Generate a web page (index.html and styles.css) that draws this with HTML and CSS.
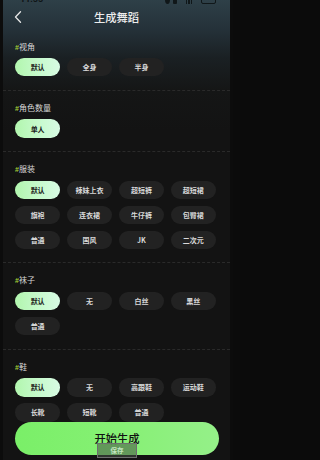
FILE: index.html
```html
<!DOCTYPE html>
<html lang="zh-CN">
<head>
<meta charset="utf-8">
<title>生成舞蹈</title>
<link rel="stylesheet" href="styles.css">
</head>
<body>
<div class="app">
  <div class="statusbar">
    <span class="time">11:55</span>
    <span class="sicons">
      <span class="dot"></span><span class="sq"></span>
      <span class="bars"><i></i><i></i><i></i></span>
      <span class="batt"></span>
    </span>
  </div>
  <header class="header">
    <svg class="back" viewBox="0 0 8 12" width="8" height="12"><path d="M6.5 0.8 L1.5 6 L6.5 11.2" fill="none" stroke="#e6e6e6" stroke-width="1.3" stroke-linecap="round" stroke-linejoin="round"/></svg>
    <h1 class="title">生成舞蹈</h1>
  </header>

  <section class="section first">
    <div class="label"><span class="hash">#</span>视角</div>
    <div class="chips">
      <div class="chip on">默认</div><div class="chip">全身</div><div class="chip">半身</div>
    </div>
  </section>

  <section class="section">
    <div class="label"><span class="hash">#</span>角色数量</div>
    <div class="chips">
      <div class="chip on">单人</div>
    </div>
  </section>

  <section class="section">
    <div class="label"><span class="hash">#</span>服装</div>
    <div class="chips">
      <div class="chip on">默认</div><div class="chip">辣妹上衣</div><div class="chip">超短裤</div><div class="chip">超短裙</div>
      <div class="chip">旗袍</div><div class="chip">连衣裙</div><div class="chip">牛仔裤</div><div class="chip">包臀裙</div>
      <div class="chip">普通</div><div class="chip">国风</div><div class="chip">JK</div><div class="chip">二次元</div>
    </div>
  </section>

  <section class="section">
    <div class="label"><span class="hash">#</span>袜子</div>
    <div class="chips">
      <div class="chip on">默认</div><div class="chip">无</div><div class="chip">白丝</div><div class="chip">黑丝</div>
      <div class="chip">普通</div>
    </div>
  </section>

  <section class="section">
    <div class="label"><span class="hash">#</span>鞋</div>
    <div class="chips">
      <div class="chip on">默认</div><div class="chip">无</div><div class="chip">高跟鞋</div><div class="chip">运动鞋</div>
      <div class="chip">长靴</div><div class="chip">短靴</div><div class="chip">普通</div>
    </div>
  </section>

  <button class="start">开始生成</button>
  <div class="toast">保存</div>
</div>
</body>
</html>
```
FILE: styles.css
```css
* { box-sizing: border-box; }
html, body { margin: 0; padding: 0; background: #0b0b0b; }
body {
  font-family: "Noto Sans CJK SC", "Noto Sans", sans-serif;
  color: #dedede;
}
.app {
  position: relative;
  width: 233px;
  height: 460px;
  overflow: hidden;
  border-left: 3px solid #0c0c0c;
  border-right: 3px solid #0c0c0c;
  background: linear-gradient(180deg, #2e4048 0px, #25323a 28px, #1a2023 58px, #151616 90px, #131313 130px, #131313 100%);
}
.statusbar {
  height: 4px;
  overflow: hidden;
  display: flex;
  align-items: flex-end;
  justify-content: space-between;
  padding: 0 14px 0 17px;
}
.time {
  font-family: "Roboto", sans-serif;
  font-size: 9px;
  line-height: 9px;
  font-weight: 700;
  color: #0e1416;
  flex: none;
}
.sicons { display: flex; align-items: flex-end; gap: 3px; flex: none; height: 10px; }
.dot { width: 5px; height: 9px; border-radius: 50%; background: #101719; }
.sq { width: 4px; height: 8px; background: #101719; border-radius: 1px; margin-right: 6px; }
.bars { display: flex; gap: 1px; align-items: flex-end; margin-right: 6px; }
.bars i { display: block; width: 1.5px; height: 9px; background: #101719; }
.batt { width: 15px; height: 8px; border: 1px solid #101719; border-radius: 2px; }

.header {
  position: relative;
  height: 25.5px;
  display: flex;
  align-items: center;
  justify-content: center;
}
.back { position: absolute; left: 10.5px; top: 6.5px; }
.title {
  margin: 0;
  font-size: 11.3px;
  line-height: 14px;
  font-weight: 500;
  color: #ececec;
  letter-spacing: 0;
}

.section {
  padding: 12px 14px 13.3px 12px;
  border-top: 1px dashed #2a2a2a;
}
.section.first { border-top: none; }
.label {
  font-size: 8px;
  line-height: 10px;
  height: 10px;
  color: #d8d8d8;
  margin-bottom: 6.7px;
}
.hash { color: #a4cf3a; font-weight: 700; font-family: "Liberation Sans", sans-serif; font-size: 7px; }
.chips {
  display: grid;
  grid-template-columns: repeat(4, 1fr);
  column-gap: 6.67px;
  row-gap: 6.7px;
}
.chip {
  height: 18.3px;
  border-radius: 9.2px;
  background: #222222;
  display: flex;
  align-items: center;
  justify-content: center;
  font-size: 7px;
  font-weight: 700;
  color: #d9d9d9;
  white-space: nowrap;
}
.chip.on {
  background: linear-gradient(90deg, #b2f6ae 0%, #c9fad0 60%, #d8fbe4 100%);
  color: #1a1a1a;
}

.start {
  position: absolute;
  left: 12px;
  top: 421.7px;
  width: 204px;
  height: 33.3px;
  border: none;
  border-radius: 17px;
  background: linear-gradient(90deg, #7aef68 0%, #86f074 50%, #95f089 100%);
  font-family: "Noto Sans CJK SC", sans-serif;
  font-size: 11.3px;
  font-weight: 500;
  color: #111;
  padding: 0;
  line-height: 14px;
}
.toast {
  position: absolute;
  left: 94.3px;
  top: 443.3px;
  width: 39.5px;
  height: 15px;
  border: 1px solid #6e6e6e;
  background: rgba(70, 80, 70, 0.55);
  color: #c4e6c0;
  font-size: 6.5px;
  line-height: 13px;
  text-align: center;
  font-weight: 700;
}
```
